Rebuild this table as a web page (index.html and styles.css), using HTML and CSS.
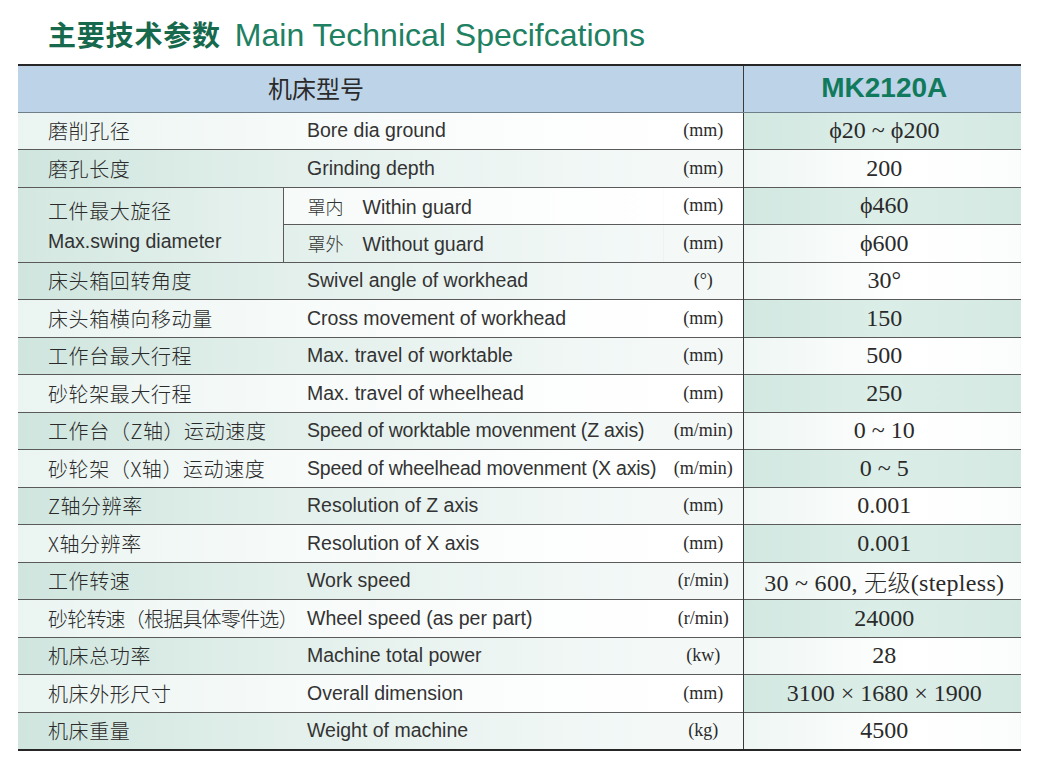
FILE: index.html
```html
<!DOCTYPE html>
<html lang="zh-CN">
<head>
<meta charset="utf-8">
<title>主要技术参数 Main Technical Specifcations</title>
<link rel="stylesheet" href="styles.css">
</head>
<body>
<div class="page">
  <h1 class="title"><span class="title-cn">主要技术参数</span><span class="title-en">Main Technical Specifcations</span></h1>
  <table class="spec">
    <colgroup>
      <col class="col-label">
      <col class="col-en">
      <col class="col-unit">
      <col class="col-val">
    </colgroup>
    <thead>
      <tr class="head">
        <th colspan="3" class="head-label">机床型号</th>
        <th class="head-val">MK2120A</th>
      </tr>
    </thead>
    <tbody>
      <tr class="lw">
        <td class="cn">磨削孔径</td><td class="en">Bore dia ground</td><td class="unit">(mm)</td><td class="val vg">ϕ20 ~ ϕ200</td>
      </tr>
      <tr class="lg">
        <td class="cn">磨孔长度</td><td class="en">Grinding depth</td><td class="unit">(mm)</td><td class="val vw">200</td>
      </tr>
      <tr class="lw">
        <td class="cn swing" rowspan="2"><div class="swing-cn">工件最大旋径</div><div class="swing-en">Max.swing diameter</div></td>
        <td class="en sub"><span class="sub-cn">罩内</span>Within guard</td><td class="unit">(mm)</td><td class="val vg">ϕ460</td>
      </tr>
      <tr class="lg">
        <td class="en sub"><span class="sub-cn">罩外</span>Without guard</td><td class="unit">(mm)</td><td class="val vw">ϕ600</td>
      </tr>
      <tr class="lg">
        <td class="cn">床头箱回转角度</td><td class="en">Swivel angle of workhead</td><td class="unit">(°)</td><td class="val vw">30°</td>
      </tr>
      <tr class="lw">
        <td class="cn">床头箱横向移动量</td><td class="en">Cross movement of workhead</td><td class="unit">(mm)</td><td class="val vg">150</td>
      </tr>
      <tr class="lg">
        <td class="cn">工作台最大行程</td><td class="en">Max. travel of worktable</td><td class="unit">(mm)</td><td class="val vw">500</td>
      </tr>
      <tr class="lw">
        <td class="cn">砂轮架最大行程</td><td class="en">Max. travel of wheelhead</td><td class="unit">(mm)</td><td class="val vg">250</td>
      </tr>
      <tr class="lg">
        <td class="cn">工作台（Z轴）运动速度</td><td class="en long">Speed of worktable movenment (Z axis)</td><td class="unit">(m/min)</td><td class="val vw">0 ~ 10</td>
      </tr>
      <tr class="lw">
        <td class="cn">砂轮架（X轴）运动速度</td><td class="en long">Speed of wheelhead movenment (X axis)</td><td class="unit">(m/min)</td><td class="val vg">0 ~ 5</td>
      </tr>
      <tr class="lg">
        <td class="cn">Z轴分辨率</td><td class="en">Resolution of Z axis</td><td class="unit">(mm)</td><td class="val vw">0.001</td>
      </tr>
      <tr class="lw">
        <td class="cn">X轴分辨率</td><td class="en">Resolution of X axis</td><td class="unit">(mm)</td><td class="val vg">0.001</td>
      </tr>
      <tr class="lg">
        <td class="cn">工作转速</td><td class="en">Work speed</td><td class="unit">(r/min)</td><td class="val vw wide">30 ~ 600, <span class="val-cn">无级</span>(stepless)</td>
      </tr>
      <tr class="lw">
        <td class="cn tight">砂轮转速（根据具体零件选）</td><td class="en">Wheel speed (as per part)</td><td class="unit">(r/min)</td><td class="val vg">24000</td>
      </tr>
      <tr class="lg">
        <td class="cn">机床总功率</td><td class="en">Machine total power</td><td class="unit">(kw)</td><td class="val vw">28</td>
      </tr>
      <tr class="lw">
        <td class="cn">机床外形尺寸</td><td class="en">Overall dimension</td><td class="unit">(mm)</td><td class="val vg">3100 × 1680 × 1900</td>
      </tr>
      <tr class="lg">
        <td class="cn">机床重量</td><td class="en">Weight of machine</td><td class="unit">(kg)</td><td class="val vw">4500</td>
      </tr>
    </tbody>
  </table>
</div>
</body>
</html>
```

FILE: styles.css
```css
html, body {
  margin: 0;
  padding: 0;
  background: #ffffff;
}

.page {
  padding: 0 18px;
  width: 1003px;
}

.title {
  margin: 0;
  height: 64px;
  box-sizing: border-box;
  padding: 14px 0 0 30px;
  line-height: 40px;
  font-weight: normal;
  white-space: nowrap;
}

.title-cn {
  font-family: "Noto Sans CJK SC", "Noto Sans", sans-serif;
  font-weight: 700;
  font-size: 28px;
  letter-spacing: 0.8px;
  color: #16694c;
  margin-right: 14px;
}

.title-en {
  font-family: "Liberation Sans", Arial, sans-serif;
  font-size: 32px;
  color: #208062;
}

.spec {
  width: 1003px;
  border-collapse: collapse;
  table-layout: fixed;
  border-top: 2px solid #262626;
  border-bottom: 2px solid #262626;
  color: #2a2a2a;
}

.col-label { width: 265px; }
.col-en { width: 381px; }
.col-unit { width: 79px; }
.col-val { width: 278px; }

.spec td, .spec th {
  padding: 0;
  vertical-align: middle;
  white-space: nowrap;
}

.head {
  height: 47px;
  background: #bdd4e8;
}

.head th {
  border-bottom: 1px solid #6f7f8a;
}

.head-label {
  font-family: "Noto Sans CJK SC", "Noto Sans", sans-serif;
  font-weight: 400;
  font-size: 24px;
  color: #2a2a2a;
  text-align: left;
  padding-left: 250px !important;
  padding-bottom: 2px !important;
}

.head-val {
  font-family: "Liberation Sans", Arial, sans-serif;
  font-weight: 700;
  font-size: 28px;
  color: #117a5c;
  text-align: center;
  border-left: 1px solid #3a3a3a;
  padding-left: 4px !important;
  padding-bottom: 2px !important;
}

.spec tbody tr {
  height: 37.5px;
}

.spec tbody td {
  border-top: 1px solid #5a5a5a;
}

.cn {
  font-family: "Noto Sans CJK SC", "Noto Sans", sans-serif;
  font-weight: 300;
  font-size: 20px;
  letter-spacing: 0.6px;
  padding-left: 30px !important;
  overflow: visible;
}

.cn.tight {
  letter-spacing: -0.8px;
}

.en {
  font-family: "Liberation Sans", Arial, sans-serif;
  font-size: 19.5px;
  color: #333333;
  padding-left: 24px !important;
}

.en.long {
  letter-spacing: -0.2px;
}

.sub {
  border-left: 1px solid #5a5a5a;
}

.sub-cn {
  font-family: "Noto Sans CJK SC", "Noto Sans", sans-serif;
  font-weight: 300;
  font-size: 18px;
  margin-right: 19px;
}

.swing {
  line-height: 30px;
}

.swing-cn {
  padding-top: 2px;
}

.swing-en {
  font-family: "Liberation Sans", Arial, sans-serif;
  font-size: 19.5px;
  letter-spacing: 0;
  color: #333333;
}

.unit {
  font-family: "Liberation Serif", "Times New Roman", serif;
  font-size: 18px;
  text-align: center;
}

.val {
  font-family: "Liberation Serif", "Times New Roman", serif;
  font-size: 24px;
  text-align: center;
  border-left: 1px solid #3a3a3a;
  padding-left: 4px !important;
}

.val.wide {
  letter-spacing: 0.3px;
}

.val-cn {
  font-family: "Noto Sans CJK SC", sans-serif;
  font-weight: 300;
  font-size: 23px;
}

/* left-side row tints */
.lg .cn, .lg .swing {
  background: linear-gradient(90deg, #cfe5de 0%, #e2efeb 100%);
}
.lg .en {
  background: linear-gradient(90deg, #e2efeb 0%, #f4f9f8 100%);
}
.lg .unit {
  background: #f4f9f8;
}

.lw .cn {
  background: linear-gradient(90deg, #eaf4f1 0%, #f6faf9 100%);
}
.lw .en {
  background: linear-gradient(90deg, #f6faf9 0%, #ffffff 100%);
}
.lw .unit {
  background: #ffffff;
}

.lw .swing {
  background: linear-gradient(90deg, #d3e7e0 0%, #e7f2ef 100%);
}

/* value column tints */
.vg {
  background: linear-gradient(90deg, #d2e8e1 0%, #dbede7 50%, #d5e9e3 100%);
}
.vw {
  background: linear-gradient(90deg, #eef6f3 0%, #ffffff 60%, #fbfdfc 100%);
}
```
